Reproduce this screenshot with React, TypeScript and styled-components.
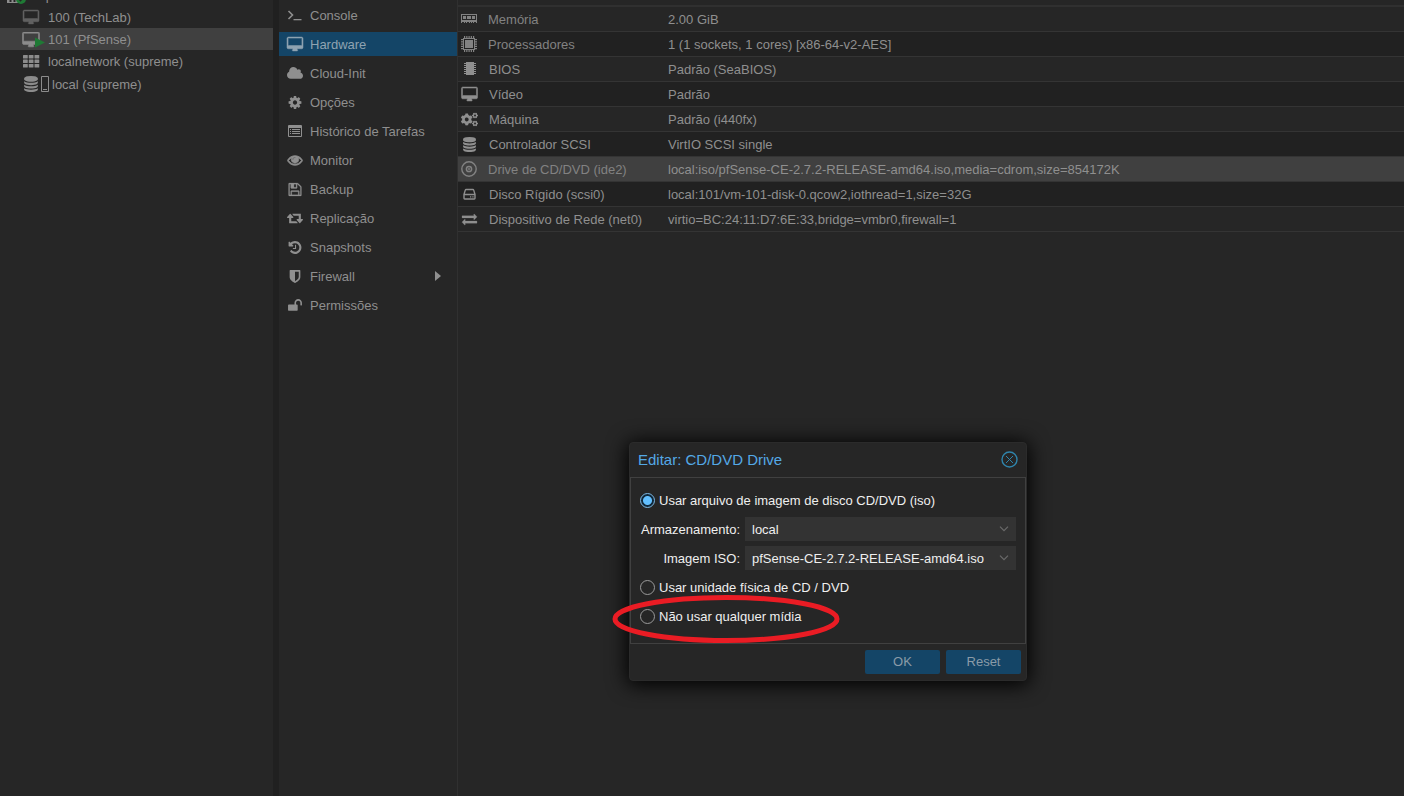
import React from "react";
import styled, { createGlobalStyle, css } from "styled-components";
import { FaCogs } from "react-icons/fa";

const color = {
  bg: "#262626",
  stripe: "#212121",
  line: "#343434",
  selected: "#404040",
  text: "#8f8f8f",
  icon: "#8c8c8c",
  blue: "#144567",
  bright: "#efefef",
};

const GlobalStyle = createGlobalStyle`
  *, *::before, *::after { box-sizing: border-box; }
  body {
    margin: 0;
    background: ${color.bg};
    color: ${color.text};
    font: 13px/16px "Liberation Sans", Arial, sans-serif;
    overflow: hidden;
  }
  button, select, input { font: inherit; color: inherit; }
`;

/* ---------- icons ---------- */

const Svg = styled.svg`
  display: block;
  flex: none;
  fill: currentColor;
  overflow: visible;
`;

const paths: Record<string, [string, string]> = {
  desktop: [
    "-64 0 1920 1792",
    "M1728 992v-832q0-13-9.5-22.5t-22.5-9.5h-1600q-13 0-22.5 9.5t-9.5 22.5v832q0 13 9.5 22.5t22.5 9.5h1600q13 0 22.5-9.5t9.5-22.5zm128-832v1088q0 66-47 113t-113 47h-544q0 37 16 77.5t32 71 16 43.5q0 26-19 45t-45 19h-512q-26 0-45-19t-19-45q0-14 16-44t32-70 16-78h-544q-66 0-113-47t-47-113v-1088q0-66 47-113t113-47h1600q66 0 113 47t47 113z",
  ],
  cloud: [
    "64 0 1920 1792",
    "M1984 1152q0 159-112.5 271.5t-271.5 112.5h-1088q-185 0-316.5-131.5t-131.5-316.5q0-132 71-241.5t187-163.5q-2-28-2-43 0-212 150-362t362-150q158 0 286.5 88t187.5 230q70-62 166-62 106 0 181 75t75 181q0 75-41 138 129 30 213 134.5t84 239.5z",
  ],
  cog: [
    "0 0 1792 1792",
    "M1152 896q0-106-75-181t-181-75-181 75-75 181 75 181 181 75 181-75 75-181zm512-109v222q0 12-8 23t-20 13l-185 28q-19 54-39 91 35 50 107 138 10 12 10 25t-9 23q-27 37-99 108t-94 71q-12 0-26-9l-138-108q-44 23-91 38-16 136-29 186-7 28-36 28h-222q-14 0-24.5-8.5t-11.5-21.5l-28-184q-49-16-90-37l-141 107q-10 9-25 9-14 0-25-11-126-114-165-168-7-10-7-23 0-12 8-23 15-21 51-66.5t54-70.5q-27-50-41-99l-183-27q-13-2-21-12.5t-8-23.5v-222q0-12 8-23t19-13l186-28q14-46 39-92-40-57-107-138-10-12-10-24 0-10 9-23 26-36 98.5-107.5t94.5-71.5q13 0 26 10l138 107q44-23 91-38 16-136 29-186 7-28 36-28h222q14 0 24.5 8.5t11.5 21.5l28 184q49 16 90 37l142-107q9-9 24-9 13 0 25 10 129 119 165 170 7 8 7 22 0 12-8 23-15 21-51 66.5t-54 70.5q26 50 41 98l183 28q13 2 21 12.5t8 23.5z",
  ],
  eye: [
    "0 64 1792 1792",
    "M1664 960q-152-236-381-353 61 104 61 225 0 185-131.5 316.5t-316.5 131.5-316.5-131.5-131.5-316.5q0-121 61-225-229 117-381 353 133 205 333.5 326.5t434.5 121.5 434.5-121.5 333.5-326.5zm-720-384q0-20-14-34t-34-14q-125 0-214.5 89.5t-89.5 214.5q0 20 14 34t34 14 34-14 14-34q0-86 61-147t147-61q20 0 34-14t14-34zm848 384q0 34-20 69-140 230-376.5 368.5t-499.5 138.5-499.5-139-376.5-368q-20-35-20-69t20-69q140-229 376.5-368t499.5-139 499.5 139 376.5 368q20 35 20 69z",
  ],
  floppy: [
    "0 0 1792 1792",
    "M512 1536h768v-384h-768v384zm896 0h128v-896q0-14-10-38.5t-20-34.5l-281-281q-10-10-34-20t-39-10v416q0 40-28 68t-68 28h-576q-40 0-68-28t-28-68v-416h-128v1280h128v-416q0-40 28-68t68-28h832q40 0 68 28t28 68v416zm-384-928v-320q0-13-9.5-22.5t-22.5-9.5h-192q-13 0-22.5 9.5t-9.5 22.5v320q0 13 9.5 22.5t22.5 9.5h192q13 0 22.5-9.5t9.5-22.5zm640 32v928q0 40-28 68t-68 28h-1344q-40 0-68-28t-28-68v-1344q0-40 28-68t68-28h928q40 0 88 20t76 48l280 280q28 28 48 76t20 88z",
  ],
  retweet: [
    "0 64 1920 1792",
    "M1280 1504q0 13-9.5 22.5t-22.5 9.5h-960q-8 0-13.5-2t-9-7-5.5-8-3-11.5-1-11.5v-600h-192q-26 0-45-19t-19-45q0-24 15-41l320-384q19-22 49-22t49 22l320 384q15 17 15 41 0 26-19 45t-45 19h-192v384h576q16 0 25 11l160 192q7 10 7 21zm640-416q0 24-15 41l-320 384q-20 23-49 23t-49-23l-320-384q-15-17-15-41 0-26 19-45t45-19h192v-384h-576q-16 0-25-12l-160-192q-7-9-7-20 0-13 9.5-22.5t22.5-9.5h960q8 0 13.5 2t9 7 5.5 8 3 11.5 1 11.5v600h192q26 0 45 19t19 45z",
  ],
  history: [
    "0 0 1792 1792",
    "M1664 896q0 156-61 298t-164 245-245 164-298 61q-172 0-327-72.5t-264-204.5q-7-10-6.5-22.5t8.5-20.5l137-138q10-9 25-9 16 2 23 12 73 95 179 147t225 52q104 0 198.5-40.5t163.5-109.5 109.5-163.5 40.5-198.5-40.5-198.5-109.5-163.5-163.5-109.5-198.5-40.5q-98 0-188 35.5t-160 101.5l137 138q31 30 14 69-17 40-59 40h-448q-26 0-45-19t-19-45v-448q0-42 40-59 39-17 69 14l130 129q107-101 244.5-156.5t284.5-55.5q156 0 298 61t245 164 164 245 61 298zm-640-288v448q0 14-9 23t-23 9h-320q-14 0-23-9t-9-23v-64q0-14 9-23t23-9h224v-352q0-14 9-23t23-9h64q14 0 23 9t9 23z",
  ],
  shield: [
    "0 0 1792 1792",
    "M1344 960v-640h-448v1137q119-63 213-137 235-184 235-360zm192-768v768q0 86-33.5 170.5t-83 150-118 127.5-126.5 103-121 77.5-89.5 49.5-42.5 20q-12 6-26 6t-26-6q-16-7-42.5-20t-89.5-49.5-121-77.5-126.5-103-118-127.5-83-150-33.5-170.5v-768q0-26 19-45t45-19h1152q26 0 45 19t19 45z",
  ],
  unlock: [
    "0 0 1792 1792",
    "M1728 576v256q0 26-19 45t-45 19h-64q-26 0-45-19t-19-45v-256q0-106-75-181t-181-75-181 75-75 181v192h96q40 0 68 28t28 68v576q0 40-28 68t-68 28h-960q-40 0-68-28t-28-68v-576q0-40 28-68t68-28h672v-192q0-185 131.5-316.5t316.5-131.5 316.5 131.5 131.5 316.5z",
  ],
  database: [
    "0 0 1792 1792",
    "M896 768q237 0 443-43t325-127v170q0 69-103 128t-280 93.5-385 34.5-385-34.5-280-93.5-103-128v-170q119 84 325 127t443 43zm0 768q237 0 443-43t325-127v170q0 69-103 128t-280 93.5-385 34.5-385-34.5-280-93.5-103-128v-170q119 84 325 127t443 43zm0-384q237 0 443-43t325-127v170q0 69-103 128t-280 93.5-385 34.5-385-34.5-280-93.5-103-128v-170q119 84 325 127t443 43zm0-1152q208 0 385 34.5t280 93.5 103 128v128q0 69-103 128t-280 93.5-385 34.5-385-34.5-280-93.5-103-128v-128q0-69 103-128t280-93.5 385-34.5z",
  ],
  exchange: [
    "0 64 1792 1792",
    "M1792 1184v192q0 13-9.5 22.5t-22.5 9.5h-1376v192q0 13-9.5 22.5t-22.5 9.5q-12 0-24-10l-319-320q-9-9-9-22 0-14 9-23l320-320q9-9 23-9 13 0 22.5 9.5t9.5 22.5v192h1376q13 0 22.5 9.5t9.5 22.5zm0-544q0 14-9 23l-320 320q-9 9-23 9-13 0-22.5-9.5t-9.5-22.5v-192h-1376q-13 0-22.5-9.5t-9.5-22.5v-192q0-13 9.5-22.5t22.5-9.5h1376v-192q0-14 9-23t23-9q12 0 24 10l319 319q9 9 9 23z",
  ],
};

const heavy: Record<string, number> = { desktop: 60, eye: 90, floppy: 30, exchange: 30 };

const Glyph = ({ name, width = 16 }: { name: string; width?: number }) => (
  <Svg width={width} height={15} viewBox={paths[name][0]} aria-hidden>
    <path d={paths[name][1]} stroke="currentColor" strokeWidth={heavy[name] ?? 0} />
  </Svg>
);

const TerminalIcon = () => (
  <Svg width={16} height={16} viewBox="0 0 16 16" aria-hidden>
    <path d="M1.500 4l4 4-4 4" fill="none" stroke="currentColor" strokeWidth="1.600" />
    <path d="M6.500 12h8v1.300h-8z" />
  </Svg>
);

const ListAltIcon = () => (
  <Svg width={16} height={16} viewBox="0 0 16 16" aria-hidden>
    <path fillRule="evenodd" d="M2 2h12q1 0 1 1v10q0 1-1 1H2q-1 0-1-1V3q0-1 1-1zm0 3v8h12V5z" />
    <path d="M3 6h1v1H3zM5 6h8v1H5zM3 8h1v1H3zM5 8h8v1H5zM3 10h1v1H3zM5 10h8v1H5z" />
  </Svg>
);

const GridIcon = () => (
  <Svg width={16} height={16} viewBox="0 0 16 16" aria-hidden>
    {[2, 6.5, 11].map((y) =>
      [0, 5.75, 11.5].map((x) => <rect key={`${x}-${y}`} x={x} y={y} width="4.75" height="3.5" rx=".5" />)
    )}
  </Svg>
);

const DriveIcon = () => (
  <Svg width={17} height={16} viewBox="0 0 17 16" aria-hidden>
    <path
      d="M3.100 8.500h10.800M5.200 3.500h6.600q.7 0 .9.600l1.300 4.200v4q0 .7-.7.700H3.700q-.7 0-.7-.7v-4l1.300-4.200q.2-.6.900-.600z"
      fill="none"
      stroke="currentColor"
      strokeWidth="1.400"
    />
    <path d="M9 10.200h1.300v1.300H9zM11.300 10.200h1.300v1.300h-1.300z" />
  </Svg>
);

const MemoryIcon = () => (
  <Svg width={16} height={16} viewBox="0 0 16 16" aria-hidden>
    <path fillRule="evenodd" d="M0 3h16v8H0zM1 4v5h14V4z" />
    <path d="M2 5h3v3H2zM6 5h4v3H6zM11 5h3v3h-3zM0 11h1v1H0zM3 11h1v1H3zM5 11h1v1H5zM8 11h1v1H8zM10 11h1v1h-1zM12 11h1v1h-1zM15 11h1v1h-1z" />
  </Svg>
);

const CpuIcon = () => (
  <Svg width={16} height={16} viewBox="0 0 16 16" aria-hidden>
    <path fillRule="evenodd" d="M2 2h12v12H2zM3 3v10h10V3z" />
    <path d="M4 4h8v8H4z" />
    {[3, 5.25, 7.5, 9.75, 12].map((p) => (
      <path key={p} d={`M${p} 0h1.200v2h-1.200zM${p} 14h1.200v2h-1.200zM0 ${p}h2v1.200H0zM14 ${p}h2v1.200h-2z`} />
    ))}
  </Svg>
);

const ChipIcon = () => (
  <Svg width={17} height={16} viewBox="0 0 17 16" aria-hidden>
    <path d="M5 1h8v13H5z" />
    {[2, 4, 6, 8, 10, 12].map((p) => (
      <path key={p} d={`M3 ${p}h2v1H3zM13 ${p}h2v1h-2z`} />
    ))}
  </Svg>
);

const DiscIcon = () => (
  <Svg width={16} height={16} viewBox="0 0 16 16" aria-hidden>
    <g fill="none" stroke="currentColor">
      <circle cx="8" cy="8" r="7.200" strokeWidth="1.400" />
      <circle cx="8" cy="8" r="2.600" strokeWidth="1.500" />
    </g>
    <circle cx="8" cy="8" r=".9" />
  </Svg>
);

const NodeIcon = () => (
  <Svg width={16} height={16} viewBox="0 0 16 16" aria-hidden>
    <path fillRule="evenodd" d="M0 1h11v15H0zM2.500 13v2h2v-2zM6.500 13v2h2v-2z" />
    <circle cx="14" cy="12" r="5" fill="#1f7a35" />
    <path d="M11.800 12l1.700 1.700 2.800-3" fill="none" stroke="#262626" strokeWidth="1.300" />
  </Svg>
);

const RunningIcon = () => (
  <Svg width={16} height={16} viewBox="0 0 16 16" aria-hidden>
    <svg width="18" height="16" x="-1" y="1" viewBox="-64 0 1920 1792">
      <path d={paths.desktop[1]} stroke="currentColor" strokeWidth="60" />
    </svg>
    <path d="M12 6.500l10 5-10 5z" fill="#1f7a35" />
  </Svg>
);

const StorageIcon = () => (
  <Svg width={26} height={16} viewBox="0 0 26 16" aria-hidden>
    <svg width="16" height="16" viewBox="0 0 1792 1792">
      <path d={paths.database[1]} />
    </svg>
    <path d="M18.500.500h7v15h-7z" fill="none" stroke="currentColor" />
    <path d="M20 13h4v1h-4z" />
  </Svg>
);

/* ---------- page ---------- */

const Page = styled.div`
  display: grid;
  grid-template-columns: 273px 6px 179px minmax(0, 1fr);
  height: 100vh;
  overflow: hidden;
`;

/* Text sits a pixel below the centre line of the icon beside it. */
const Label = styled.span`
  padding-top: 2px;
`;

const Tree = styled.nav`
  overflow: hidden;
`;

const TreeList = styled.ul`
  list-style: none;
  margin: -16px 0 0;
  padding: 0;
`;

const TreeItem = styled.a<{ $root?: boolean; $active?: boolean; $dim?: boolean; $storage?: boolean }>`
  display: flex;
  align-items: center;
  gap: ${(p) => (p.$storage ? 3 : 9)}px;
  height: ${(p) => (p.$storage ? 24 : 22)}px;
  padding-left: ${(p) => (p.$root ? 7 : 23)}px;
  color: inherit;
  text-decoration: none;
  background: ${(p) => (p.$active ? color.selected : "transparent")};
  svg { color: ${(p) => (p.$dim ? "#606060" : color.icon)}; }
`;

const Splitter = styled.div`
  background: #202020;
`;

const Menu = styled.nav`
  display: flex;
  flex-direction: column;
  gap: 5px;
  padding-top: 3px;
  border-right: 1px solid #303030;
`;

const MenuItem = styled.button<{ $active?: boolean }>`
  display: flex;
  align-items: center;
  gap: 7px;
  height: 24px;
  padding: 0 16px 0 8px;
  border: 0;
  text-align: left;
  background: ${(p) => (p.$active ? color.blue : "transparent")};
  ${(p) => p.$active && css`color: #8fa3b1;`}
`;

const MenuLabel = styled(Label)`
  flex: 1;
`;

const Main = styled.main`
  padding-top: 5px;
`;

const Hardware = styled.table`
  width: 100%;
  border-spacing: 0;
  table-layout: fixed;
  border-top: 2px solid #303030;
`;

const KeyCell = styled.th`
  width: 200px;
  height: 25px;
  padding: 0 3px;
  border-bottom: 1px solid ${color.line};
  font-weight: normal;
  text-align: left;
`;

const KeyContent = styled.span<{ $dim: boolean }>`
  display: flex;
  align-items: center;
  gap: 11px;
  white-space: nowrap;
  ${(p) => p.$dim && css`color: #828282;`}
`;

const ValueCell = styled.td`
  padding: 2px 10px 0;
  border-bottom: 1px solid ${color.line};
  white-space: nowrap;
  overflow: hidden;
`;

const Row = styled.tr<{ $selected?: boolean }>`
  &:nth-child(even) { background: ${color.stripe}; }
  ${(p) => p.$selected && css`&& { background: ${color.selected}; }`}
`;

/* ---------- dialog ---------- */

const Dialog = styled.form`
  position: absolute;
  left: 629px;
  top: 442px;
  width: 398px;
  border: 1px solid #2b2b2b;
  border-radius: 4px;
  background: ${color.bg};
  color: ${color.bright};
  box-shadow: 0 2px 20px 2px #000;
`;

const DialogHeader = styled.header`
  display: flex;
  align-items: center;
  justify-content: space-between;
  height: 34px;
  padding: 0 8px;
`;

const DialogTitle = styled.h2`
  margin: 0;
  font-size: 15px;
  line-height: 18px;
  font-weight: normal;
  color: #54a9e6;
`;

const CloseButton = styled.button`
  padding: 0 0 2px;
  border: 0;
  background: none;
  color: #2f84ab;
`;

const DialogBody = styled.div`
  display: flex;
  flex-direction: column;
  gap: 5px;
  padding: 10px 9px 15px;
  border: 1px solid #404040;
`;

const RadioRow = styled.label`
  display: flex;
  align-items: center;
  gap: 4px;
  height: 24px;
`;

const Radio = styled.input`
  appearance: none;
  flex: none;
  width: 15px;
  height: 15px;
  margin: 0;
  border: 1px solid #9a9a9a;
  border-radius: 50%;
  &:checked {
    border-color: #7cb8e4;
    background: radial-gradient(circle, #62bfff 4px, #10283a 5px);
  }
`;

const FieldRow = styled.div`
  display: grid;
  grid-template-columns: 100px 1fr;
  gap: 5px;
  align-items: center;
`;

const FieldLabel = styled.label`
  padding-top: 2px;
  text-align: right;
`;

const SelectBox = styled.div`
  display: grid;
  align-items: center;
  background: #333333;
  > * { grid-area: 1 / 1; }
  > svg { justify-self: end; margin-right: 7px; color: #6a6a6a; pointer-events: none; }
`;

const Select = styled.select`
  appearance: none;
  width: 100%;
  height: 24px;
  padding: 2px 22px 0 7px;
  border: 0;
  border-radius: 0;
  background: transparent;
`;

const DialogFooter = styled.footer`
  display: flex;
  justify-content: flex-end;
  gap: 6px;
  padding: 6px 5px;
`;

const ActionButton = styled.button`
  width: 75px;
  height: 24px;
  padding: 0;
  border: 0;
  border-radius: 2px;
  background: ${color.blue};
  color: #8a9ba8;
`;

const Highlight = styled.svg`
  position: absolute;
  left: -18px;
  top: 151px;
  pointer-events: none;
`;

const Chevron = () => (
  <Svg width={10} height={6} viewBox="0 0 10 6" aria-hidden>
    <path d="M1 .7l4 4 4-4" fill="none" stroke="currentColor" strokeWidth="1.200" />
  </Svg>
);

const Arrow = () => (
  <Svg width={6} height={10} viewBox="0 0 6 10" aria-hidden>
    <path d="M0 0l6 5-6 5z" />
  </Svg>
);

const menu: [string, React.ReactNode][] = [
  ["Console", <TerminalIcon />],
  ["Hardware", <Glyph name="desktop" />],
  ["Cloud-Init", <Glyph name="cloud" />],
  ["Opções", <Glyph name="cog" />],
  ["Histórico de Tarefas", <ListAltIcon />],
  ["Monitor", <Glyph name="eye" />],
  ["Backup", <Glyph name="floppy" />],
  ["Replicação", <Glyph name="retweet" />],
  ["Snapshots", <Glyph name="history" />],
  ["Firewall", <Glyph name="shield" />],
  ["Permissões", <Glyph name="unlock" />],
];

type Device = { name: string; icon: React.ReactNode; value: string; dim?: boolean };

const hardware: Device[] = [
  { name: "Memória", icon: <MemoryIcon />, value: "2.00 GiB", dim: true },
  { name: "Processadores", icon: <CpuIcon />, value: "1 (1 sockets, 1 cores) [x86-64-v2-AES]", dim: true },
  { name: "BIOS", icon: <ChipIcon />, value: "Padrão (SeaBIOS)" },
  { name: "Vídeo", icon: <Glyph name="desktop" width={17} />, value: "Padrão" },
  { name: "Máquina", icon: <FaCogs size={17} />, value: "Padrão (i440fx)" },
  { name: "Controlador SCSI", icon: <Glyph name="database" width={17} />, value: "VirtIO SCSI single" },
  {
    name: "Drive de CD/DVD (ide2)",
    icon: <DiscIcon />,
    value: "local:iso/pfSense-CE-2.7.2-RELEASE-amd64.iso,media=cdrom,size=854172K",
    dim: true,
  },
  { name: "Disco Rígido (scsi0)", icon: <DriveIcon />, value: "local:101/vm-101-disk-0.qcow2,iothread=1,size=32G" },
  {
    name: "Dispositivo de Rede (net0)",
    icon: <Glyph name="exchange" width={17} />,
    value: "virtio=BC:24:11:D7:6E:33,bridge=vmbr0,firewall=1",
  },
];

export default function App() {
  return (
    <>
      <GlobalStyle />
      <Page>
        <Tree>
          <TreeList>
            <li><TreeItem href="#supreme" $root><NodeIcon /><Label>supreme</Label></TreeItem></li>
            <li><TreeItem href="#100" $dim><Glyph name="desktop" /><Label>100 (TechLab)</Label></TreeItem></li>
            <li><TreeItem href="#101" $active><RunningIcon /><Label>101 (PfSense)</Label></TreeItem></li>
            <li><TreeItem href="#localnetwork"><GridIcon /><Label>localnetwork (supreme)</Label></TreeItem></li>
            <li><TreeItem href="#local" $storage><StorageIcon /><Label>local (supreme)</Label></TreeItem></li>
          </TreeList>
        </Tree>
        <Splitter />
        <Menu>
          {menu.map(([label, icon]) => (
            <MenuItem key={label} type="button" $active={label === "Hardware"}>
              {icon}
              <MenuLabel>{label}</MenuLabel>
              {label === "Firewall" && <Arrow />}
            </MenuItem>
          ))}
        </Menu>
        <Main>
          <Hardware>
            <tbody>
              {hardware.map(({ name, icon, value, dim }) => (
                <Row key={name} $selected={name.startsWith("Drive")}>
                  <KeyCell scope="row">
                    <KeyContent $dim={!!dim}>{icon}<Label>{name}</Label></KeyContent>
                  </KeyCell>
                  <ValueCell>{value}</ValueCell>
                </Row>
              ))}
            </tbody>
          </Hardware>
        </Main>
      </Page>

      <Dialog onSubmit={(e) => e.preventDefault()}>
        <DialogHeader>
          <DialogTitle>Editar: CD/DVD Drive</DialogTitle>
          <CloseButton type="button" aria-label="Fechar">
            <Svg width={17} height={17} viewBox="0 0 17 17" aria-hidden>
              <g fill="none" stroke="currentColor">
                <circle cx="8.500" cy="8.500" r="7.500" strokeWidth="1.400" />
                <path d="M5 5l7 7M12 5l-7 7" />
              </g>
            </Svg>
          </CloseButton>
        </DialogHeader>
        <DialogBody>
          <RadioRow>
            <Radio type="radio" name="media" defaultChecked />
            <Label>Usar arquivo de imagem de disco CD/DVD (iso)</Label>
          </RadioRow>
          <FieldRow>
            <FieldLabel htmlFor="storage">Armazenamento:</FieldLabel>
            <SelectBox>
              <Select id="storage"><option>local</option></Select>
              <Chevron />
            </SelectBox>
          </FieldRow>
          <FieldRow>
            <FieldLabel htmlFor="image">Imagem ISO:</FieldLabel>
            <SelectBox>
              <Select id="image"><option>pfSense-CE-2.7.2-RELEASE-amd64.iso</option></Select>
              <Chevron />
            </SelectBox>
          </FieldRow>
          <RadioRow>
            <Radio type="radio" name="media" />
            <Label>Usar unidade física de CD / DVD</Label>
          </RadioRow>
          <RadioRow>
            <Radio type="radio" name="media" />
            <Label>Não usar qualquer mídia</Label>
          </RadioRow>
        </DialogBody>
        <DialogFooter>
          <ActionButton type="submit">OK</ActionButton>
          <ActionButton type="reset">Reset</ActionButton>
        </DialogFooter>
        <Highlight width="228" height="50" viewBox="0 0 228 50" aria-hidden>
          <ellipse cx="114" cy="25" rx="111" ry="21.500" fill="none" stroke="#ea1c24" strokeWidth="5" />
        </Highlight>
      </Dialog>
    </>
  );
}
